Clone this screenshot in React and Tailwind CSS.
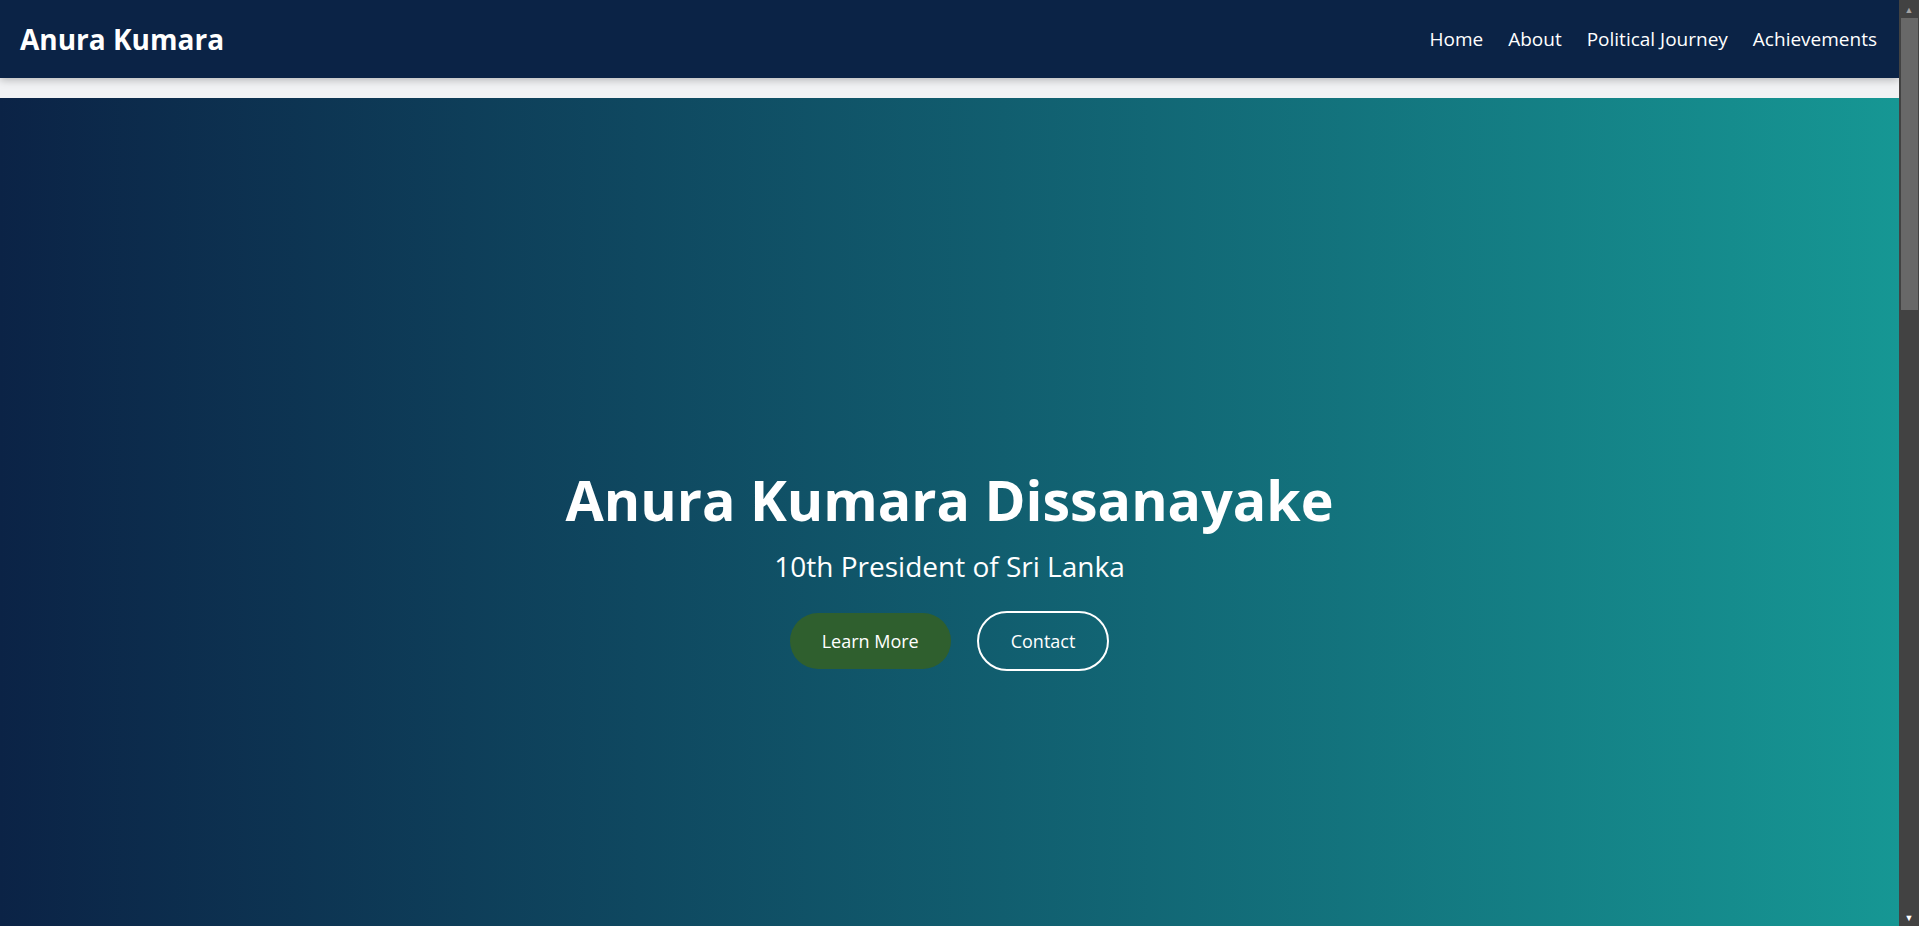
import React from "react";

const links = ["Home", "About", "Political Journey", "Achievements"];

export default function App() {
    return (
        <div className="flex h-screen overflow-hidden bg-[#f1f2f4] font-['Open_Sans',sans-serif]">
            <div className="min-w-0 flex-1 overflow-hidden">
                {/* Navbar */}
                <nav className="relative z-10 flex h-[78px] items-center justify-between bg-[#0b2346] pl-5 pr-[22px] shadow-[0_2px_8px_rgba(0,0,0,0.25)]">
                    <div className="text-[28px] font-bold text-white">Anura Kumara</div>
                    <ul className="flex items-center gap-[25px]">
                        {links.map((link) => (
                            <li key={link}>
                                <a href="#" className="text-[19px] text-white">
                                    {link}
                                </a>
                            </li>
                        ))}
                    </ul>
                </nav>

                <div className="h-5" />

                {/* Hero */}
                <section className="flex h-[926px] flex-col items-center justify-center bg-gradient-to-r from-[#0b2346] to-[#169794] pt-4 text-center text-white">
                    <h1 className="text-[55.5px] font-bold leading-[1.2]">Anura Kumara Dissanayake</h1>
                    <p className="mt-3 text-[28px] leading-normal">10th President of Sri Lanka</p>
                    <div className="mt-6 flex items-center gap-[26px]">
                        <a href="#" className="rounded-full bg-[#2f5f2e] px-8 py-4 text-[18px] leading-6">
                            Learn More
                        </a>
                        <a href="#" className="rounded-full border-2 border-white px-8 py-4 text-[18px] leading-6">
                            Contact
                        </a>
                    </div>
                </section>
            </div>

            {/* Scrollbar */}
            <div className="flex w-5 flex-col items-center bg-[#424242]">
                <div className="flex h-[18px] items-center justify-center text-[9px] leading-none text-[#a3a3a3]">▲</div>
                <div className="h-[292px] w-[17px] bg-[#686868]" />
                <div className="flex-1" />
                <div className="flex h-[18px] items-center justify-center text-[9px] leading-none text-white">▼</div>
            </div>
        </div>
    );
}
